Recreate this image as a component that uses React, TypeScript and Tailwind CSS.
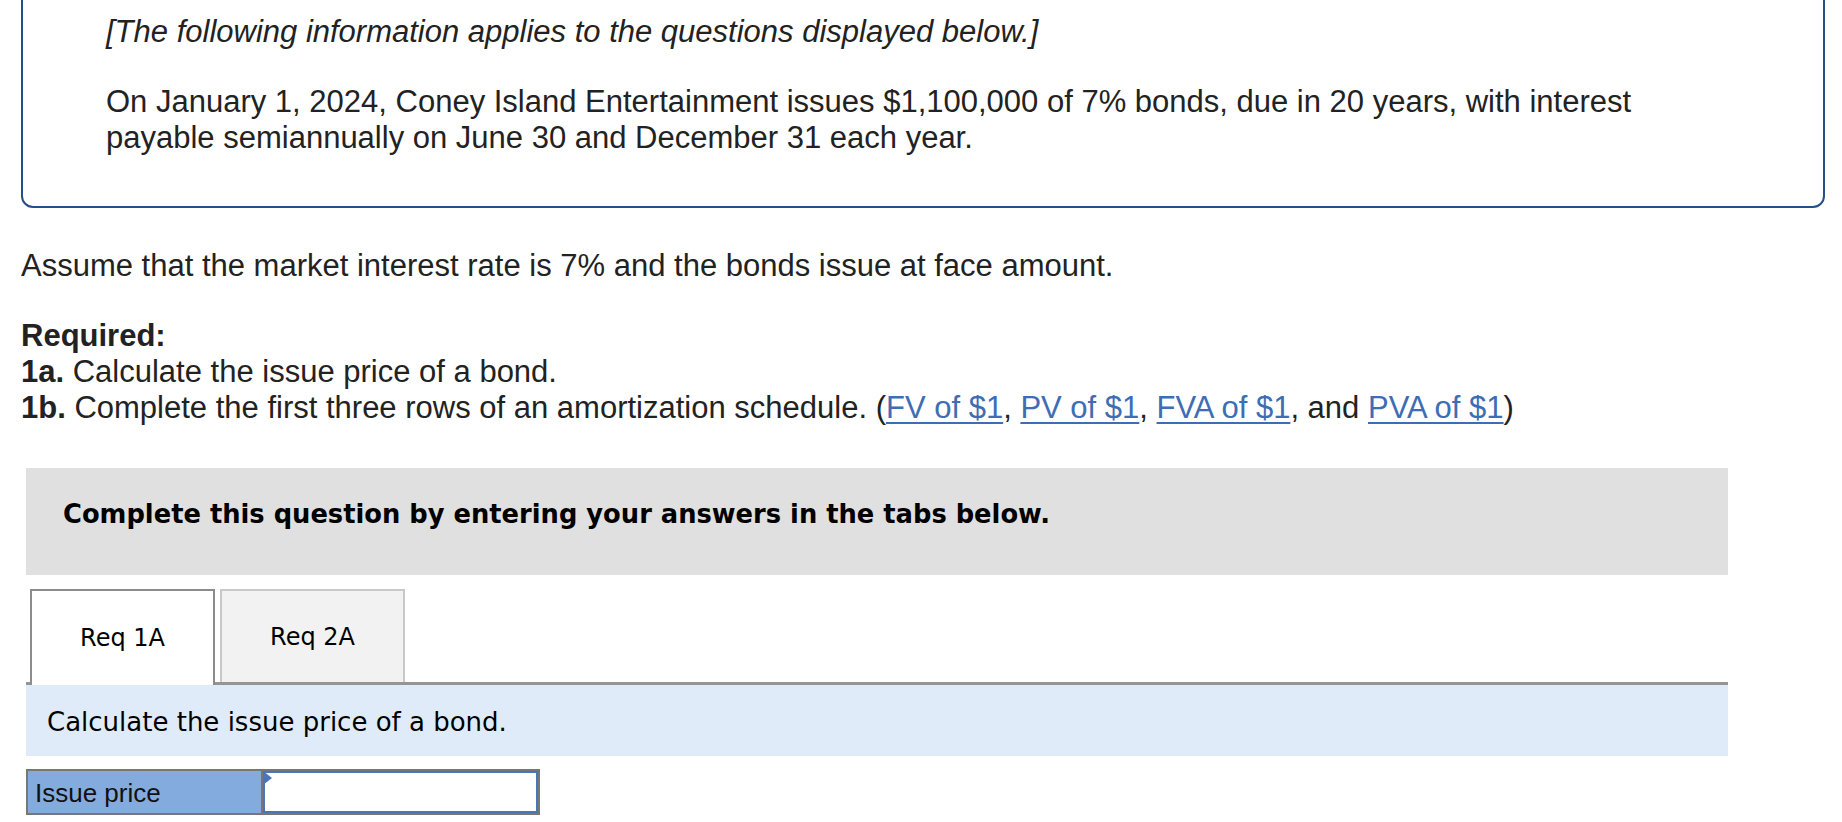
import React from "react";

const link =
  "text-[#3d6db4] underline decoration-[2px] underline-offset-[4px]";

export default function App() {
  return (
    <div className="w-[1842px] h-[822px] overflow-hidden bg-white pl-[21px] pr-[17px] [font-family:'Liberation_Sans',Arial,sans-serif] text-[#222]">
      <div className="-mt-[2px] border-2 border-[#254e8a] rounded-b-[12px] pl-[83px] pr-[100px] pt-[14px] pb-[50px] text-[31px] leading-[36px]">
        <p className="italic">
          [The following information applies to the questions displayed below.]
        </p>
        <p className="mt-[34px]">
          On January 1, 2024, Coney Island Entertainment issues $1,100,000 of 7% bonds, due in 20 years, with interest payable semiannually on June 30 and December 31 each year.
        </p>
      </div>

      <p className="mt-[40px] text-[31px] leading-[36px]">
        Assume that the market interest rate is 7% and the bonds issue at face amount.
      </p>

      <div className="mt-[34px] text-[31px] leading-[36px]">
        <p className="font-bold">Required:</p>
        <p>
          <span className="font-bold">1a.</span> Calculate the issue price of a bond.
        </p>
        <p>
          <span className="font-bold">1b.</span> Complete the first three rows of an amortization schedule. (
          <a className={link}>FV of $1</a>, <a className={link}>PV of $1</a>,{" "}
          <a className={link}>FVA of $1</a>, and <a className={link}>PVA of $1</a>)
        </p>
      </div>

      <div className="ml-[5px] w-[1702px]">
        <div className="mt-[42px] h-[107px] bg-[#e0e0e0] pl-[37px] pt-[27px] [font-family:'DejaVu_Sans',Verdana,sans-serif] font-bold text-[25.75px] text-black">
          Complete this question by entering your answers in the tabs below.
        </div>

        <div className="mt-[14px] flex items-start border-b-[3px] border-[#959595] h-[96px] [font-family:'DejaVu_Sans',Verdana,sans-serif] text-[24px] text-black">
          <div className="w-[4px]" />
          <div className="w-[185px] h-[96px] border-2 border-b-0 border-[#8c8c8c] bg-white flex items-center justify-center relative z-10">
            Req 1A
          </div>
          <div className="w-[5px]" />
          <div className="w-[185px] h-[93px] border-2 border-b-0 border-[#c8c8c8] bg-[#f2f2f2] flex items-center justify-center">
            Req 2A
          </div>
        </div>

        <div className="h-[71px] bg-[#dfebf8] pl-[21px] pt-[22px] [font-family:'DejaVu_Sans',Verdana,sans-serif] text-[26px] leading-[30px] text-black">
          Calculate the issue price of a bond.
        </div>

        <div className="mt-[13px] flex w-[514px] h-[46px] border-2 border-[#777]">
          <div className="w-[233px] bg-[#84abde] flex items-center pl-[7px] pt-[2px] text-[26px] text-[#111]">
            Issue price
          </div>
          <div className="w-[2px] bg-[#777]" />
          <div className="flex-1 bg-white border-2 border-[#4a76b8] relative">
            <svg
              className="absolute -top-[2px] -left-[2px]"
              width="10"
              height="14"
              viewBox="0 0 10 14"
            >
              <polygon points="0,0 9,7 0,14" fill="#4a76b8" />
            </svg>
          </div>
        </div>
      </div>
    </div>
  );
}
